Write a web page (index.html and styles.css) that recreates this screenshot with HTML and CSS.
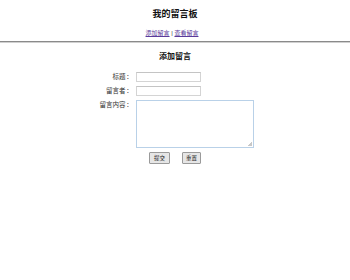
FILE: index.html
```html
<!DOCTYPE html>
<html lang="zh">
<head>
<meta charset="utf-8">
<title>我的留言板</title>
<link rel="stylesheet" href="styles.css">
</head>
<body>
<h1 class="title">我的留言板</h1>
<nav class="nav"><a href="#" class="link">添加留言</a> | <a href="#" class="link">查看留言</a></nav>
<hr class="rule">
<h2 class="subtitle">添加留言</h2>
<form class="form">
  <div class="grid">
    <label class="label">标题<span class="colon">：</span></label>
    <input class="field" type="text">
    <label class="label">留言者<span class="colon">：</span></label>
    <input class="field" type="text">
    <label class="label">留言内容<span class="colon">：</span></label>
    <textarea class="area"></textarea>
  </div>
  <div class="buttons">
    <button type="button" class="btn btn-submit">提交</button>
    <button type="reset" class="btn btn-reset">重置</button>
  </div>
</form>
</body>
</html>
```

FILE: styles.css
```css
html, body {
  margin: 0;
  padding: 0;
  background: #fff;
}
body {
  font-family: "Liberation Sans", "Noto Sans CJK SC", sans-serif;
  color: #222;
}
.title {
  margin: 9px 0 0;
  font-size: 9px;
  line-height: 10px;
  font-weight: bold;
  text-align: center;
  color: #111;
}
.nav {
  margin-top: 10px;
  padding-right: 6px;
  font-size: 6px;
  line-height: 8px;
  text-align: center;
  color: #333;
}
.link {
  color: #5a3a9a;
  text-decoration: underline;
}
.rule {
  margin: 4px 0 0;
  height: 0;
  border: 0;
  border-top: 1px solid #8a8a8a;
  border-bottom: 1px solid #d0d0d0;
}
.subtitle {
  margin: 9px 0 0;
  font-size: 8px;
  line-height: 10px;
  font-weight: bold;
  text-align: center;
  color: #111;
}
.form {
  margin: 10px 0 0;
}
.grid {
  display: grid;
  grid-template-columns: 37px 118px;
  column-gap: 2px;
  row-gap: 4px;
  justify-content: center;
  align-items: start;
}
.label {
  font-family: "Noto Sans CJK SC", sans-serif;
  font-size: 6.5px;
  line-height: 9px;
  text-align: right;
  color: #333;
  white-space: nowrap;
}
.colon {
  display: inline-block;
  width: 8px;
  text-align: center;
}
.field {
  box-sizing: border-box;
  width: 65px;
  height: 10px;
  margin: 0;
  padding: 0;
  border: 1px solid #d4d4d4;
  border-top-color: #c4c4c4;
  background: #fff;
}
.area {
  box-sizing: border-box;
  display: block;
  width: 118px;
  height: 48px;
  margin: 0;
  padding: 0;
  resize: none;
  border: 1px solid #b9d1e8;
  background: #fff linear-gradient(135deg, transparent 50%, #c8c8c8 50%) no-repeat right 1px bottom 1px / 4px 4px;
}
.buttons {
  display: flex;
  justify-content: center;
  gap: 12px;
  margin-top: 4px;
}
.btn {
  box-sizing: border-box;
  height: 12px;
  margin: 0;
  padding: 0;
  font-family: "Liberation Sans", "Noto Sans CJK SC", sans-serif;
  font-size: 5.5px;
  line-height: 10px;
  color: #222;
  background: #e6e6e6;
  border: 1px solid #9a9a9a;
  border-radius: 1px;
}
.btn-submit { width: 21px; }
.btn-reset { width: 19px; }
```
